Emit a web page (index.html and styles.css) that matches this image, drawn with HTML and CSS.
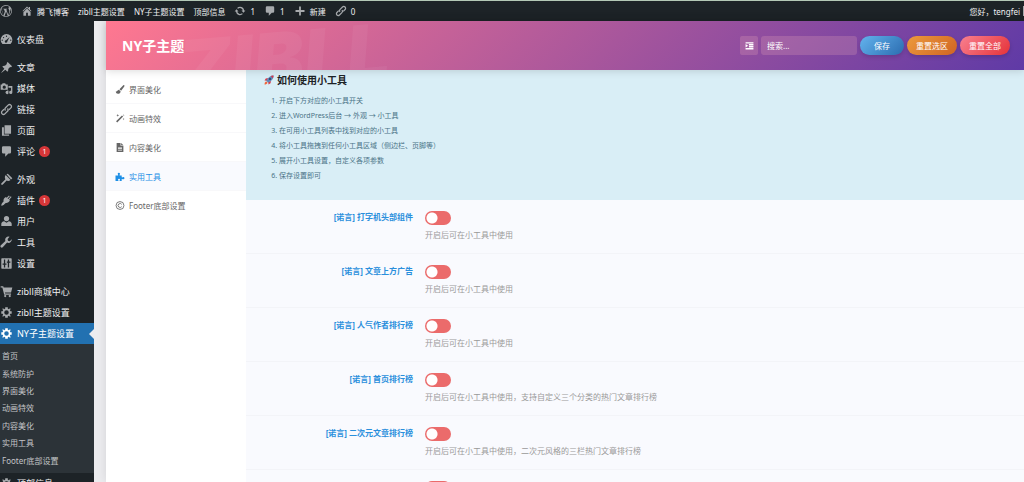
FILE: index.html
```
<!DOCTYPE html>
<html lang="zh-CN">
  <head>
    <meta charset="UTF-8" />
    <meta name="viewport" content="width=device-width, initial-scale=1.0" />
    <title>NY子主题设置</title>
    <link rel="stylesheet" href="styles.css">
  </head>
  <body>
    <!-- shared icons -->
    <svg class="sprite" aria-hidden="true">
      <symbol id="i-gear" viewBox="0 0 20 20">
        <path fill-rule="evenodd" d="M18 12h-2.200c-.1.600-.4 1.200-.7 1.700l1.600 1.600-1.400 1.400-1.600-1.600c-.5.300-1.100.600-1.700.700V18H8v-2.200c-.6-.1-1.200-.4-1.700-.7l-1.600 1.600-1.400-1.400 1.600-1.600c-.3-.5-.6-1.100-.7-1.700H2V8h2.200c.1-.6.4-1.200.7-1.700L3.300 4.700l1.400-1.400 1.600 1.600c.5-.3 1.100-.6 1.700-.7V2h4v2.200c.6.1 1.200.4 1.700.7l1.600-1.600 1.400 1.400-1.600 1.600c.3.5.6 1.100.7 1.700H18zm-8 1.500a3.500 3.500 0 1 0 0-7 3.500 3.500 0 0 0 0 7z" />
      </symbol>
      <symbol id="i-comment" viewBox="0 0 20 20">
        <path d="M5 2h10a2 2 0 0 1 2 2v7a2 2 0 0 1-2 2h-2l-5 5v-5H5a2 2 0 0 1-2-2V4a2 2 0 0 1 2-2z" />
      </symbol>
      <symbol id="i-link" viewBox="0 0 20 20">
        <g fill="none" stroke="currentColor" stroke-width="2">
          <path d="M8.500 11.500a3 3 0 0 1 0-4.200l4-4a3 3 0 0 1 4.300 4.200l-3 3" />
          <path d="M11.500 8.500a3 3 0 0 1 0 4.200l-4 4a3 3 0 0 1-4.300-4.200l3-3" />
        </g>
      </symbol>
    </svg>

    <header class="admin-bar">
      <a href="#" class="wp-logo" aria-label="WordPress">
        <svg viewBox="0 0 20 20"><path fill-rule="evenodd" d="M10 0a10 10 0 1 0 0 20 10 10 0 0 0 0-20zm0 1.200a8.800 8.800 0 0 1 6 2.400c-1.500 0-2 1-2 1.800 0 1.500 1.600 2.400 1.600 4.600 0 1-.4 2.200-.9 3.800l-1 3-3.200-9.700 1.300-.1V6.100L8.500 6.200 5.400 6.100V7l1.200.1 1.400 3.900-2 5.900L2.800 7.100 4 7V6.100L2.200 6A8.800 8.800 0 0 1 10 1.200zM1.900 6.600l4.200 11.300A8.800 8.800 0 0 1 1.900 6.600zm8.300 4.200 2.700 7.500a8.800 8.800 0 0 1-5.200.2zm7.500-5a8.800 8.800 0 0 1-3.300 11.800l2.700-7.800c.5-1.300.7-2.600.6-4z" /></svg>
      </a>
      <a href="#">
        <svg viewBox="0 0 20 20"><path d="M16 8.500 17.500 10l-1 1L10 4.500 3.500 11l-1-1L10 2.500l3 3V3.500h2v4zM10 6l6 5.900V18h-4.500v-5h-3v5H4v-6.100z" /></svg>腾飞博客
      </a>
      <a href="#">zibll主题设置</a>
      <a href="#">NY子主题设置</a>
      <a href="#">顶部信息</a>
      <a href="#">
        <svg viewBox="0 0 20 20"><path d="M10 3a7 7 0 0 1 6.900 6H19l-3.200 4L12.500 9h2.200a4.900 4.900 0 0 0-8-2.600L5.200 4.900A7 7 0 0 1 10 3zM4.200 7l3.300 4H5.300a4.900 4.900 0 0 0 8 2.600l1.500 1.500A7 7 0 0 1 3.100 11H1z" /></svg>1
      </a>
      <a href="#"><svg><use href="#i-comment" /></svg>1</a>
      <a href="#">
        <svg viewBox="0 0 20 20"><path d="M8.500 2.500h3v6h6v3h-6v6h-3v-6h-6v-3h6z" /></svg>新建
      </a>
      <a href="#"><svg><use href="#i-link" /></svg>0</a>
      <a href="#" class="account">您好，tengfei<span class="avatar"></span></a>
    </header>

    <div class="wrap">
      <nav class="side-menu">
        <ul>
          <li><a href="#"><svg viewBox="0 0 20 20"><path fill-rule="evenodd" d="M3.800 17A9 9 0 1 1 16.200 17zM10 4a1 1 0 1 0 0 2 1 1 0 0 0 0-2zM5.500 6a1 1 0 1 0 0 2 1 1 0 0 0 0-2zm9.300 0L9.300 11a2 2 0 1 0 2 1.700zM3.500 10a1 1 0 1 0 0 2 1 1 0 0 0 0-2zm13 0a1 1 0 1 0 0 2 1 1 0 0 0 0-2z" /></svg>仪表盘</a></li>
        </ul>
        <ul>
          <li><a href="#"><svg viewBox="0 0 20 20"><path d="m10.400 3 1.400-1.500 6.700 6.700L17 9.600l-1.500-.2-2.900 2.900c.4 1.600.1 3-1.200 4.200l-3.200-3.200L2.500 18 2 17.500l4.700-5.700-3.200-3.200c1.200-1.200 2.600-1.600 4.200-1.200l2.900-2.900z" /></svg>文章</a></li>
          <li><a href="#"><svg viewBox="0 0 20 20"><path fill-rule="evenodd" d="M1 4h2l1-2h4l1 2h3v8H1zm5.500 1.500a2.500 2.500 0 1 0 0 5 2.500 2.500 0 0 0 0-5zM13 6h6v10a2.500 2.500 0 1 1-2-2.400V9h-4zm-3.500 8H11v-1h2v4.500a2.500 2.500 0 1 1-3.500-3.500z" /></svg>媒体</a></li>
          <li><a href="#"><svg><use href="#i-link" /></svg>链接</a></li>
          <li><a href="#"><svg viewBox="0 0 20 20"><path d="M7 2h10v13H7zM3 5h3v11h8v2H3z" /></svg>页面</a></li>
          <li><a href="#"><svg><use href="#i-comment" /></svg>评论<span class="count">1</span></a></li>
        </ul>
        <ul>
          <li><a href="#"><svg viewBox="0 0 20 20"><path d="m10 2 2-1 7 7-2 2zM8.800 3.200l7.400 7.400c-2 1.800-4.500 2-6 .8L4 18c-1.400.8-2.800-.7-2-2l6.400-6.300c-1.400-2-1.200-4.600.4-6.500z" /></svg>外观</a></li>
          <li><a href="#"><svg viewBox="0 0 20 20"><path d="m13 7.500 3.500-4 1.300 1.200-3.600 4 1 1.100c-1.300 3-3.500 4.500-6.400 4.200C6.500 16.500 4.500 18 2 18c0-2.600 1.200-4.700 3.500-6.500-.6-3 .8-5.300 3.700-6.800l1.100 1.100 3.400-3.500 1.400 1.300-3.500 3.500z" /></svg>插件<span class="count">1</span></a></li>
          <li><a href="#"><svg viewBox="0 0 20 20"><circle cx="10" cy="5.500" r="4" /><path d="M6.500 9.500 10 12l3.500-2.500c3 .5 4.500 2 4.500 4.500v3H2v-3c0-2.500 1.500-4 4.500-4.500z" /></svg>用户</a></li>
          <li><a href="#"><svg viewBox="0 0 20 20"><path d="M16.700 8.800a5 5 0 0 1-5.800 1.300l-6.700 7.100a2 2 0 0 1-2.900-2.900l7-6.600a5 5 0 0 1 6.500-6.400L11.700 4.500l.6 2.800 2.800.6L18 5c.3 1.400-.2 2.800-1.300 3.800z" /></svg>工具</a></li>
          <li><a href="#"><svg viewBox="0 0 20 20"><path fill-rule="evenodd" d="M3 2h14a1 1 0 0 1 1 1v14a1 1 0 0 1-1 1H3a1 1 0 0 1-1-1V3a1 1 0 0 1 1-1zm3 2v6H4v2h2v4h2v-4h2v-2H8V4zm6 0v3h-1.500v2H12v7h2V9h2V7h-2V4z" /></svg>设置</a></li>
        </ul>
        <ul>
          <li><a href="#"><svg viewBox="0 0 20 20"><path d="M1 2h4l.6 2H19l-2 7.500H7.500L8 13h9v2H6.500L3.600 4H1z" /><circle cx="8" cy="17" r="1.700" /><circle cx="15" cy="17" r="1.700" /></svg>zibll商城中心</a></li>
          <li><a href="#"><svg><use href="#i-gear" /></svg>zibll主题设置</a></li>
          <li class="current">
            <a href="#"><svg><use href="#i-gear" /></svg>NY子主题设置</a>
            <ul class="submenu">
              <li><a href="#">首页</a></li>
              <li><a href="#">系统防护</a></li>
              <li><a href="#">界面美化</a></li>
              <li><a href="#">动画特效</a></li>
              <li><a href="#">内容美化</a></li>
              <li><a href="#">实用工具</a></li>
              <li><a href="#">Footer底部设置</a></li>
            </ul>
          </li>
          <li><a href="#"><svg><use href="#i-gear" /></svg>顶部信息</a></li>
        </ul>
      </nav>

      <main class="panel">
        <div class="panel-header">
          <span class="watermark" aria-hidden="true">ZIBLL</span>
          <h1>NY子主题</h1>
          <div class="actions">
            <button type="button" class="expand" aria-label="展开">
              <svg viewBox="0 0 16 16"><path d="M1 2h14v2.500H1zm6 3.500h8V8H7zM7 9h8v2.500H7zm-6 3.500h14V15H1zM1 5.500 5.500 8.500 1 11.500z" /></svg>
            </button>
            <input type="text" placeholder="搜索..." aria-label="搜索" />
            <button type="button" class="btn save">保存</button>
            <button type="button" class="btn reset-section">重置选区</button>
            <button type="button" class="btn reset-all">重置全部</button>
          </div>
        </div>

        <div class="panel-body">
          <nav class="tabs">
            <a href="#"><svg viewBox="0 0 16 16"><path d="M15.500.500c.9.800.4 1.800-.2 2.800L10 10 7 7.500 13 1.200c.9-.9 1.700-1.300 2.500-.7zM6 8.500 9 11c.2 3-2 4.500-4.700 4.500C2 15.500.8 14 .5 11.500c2.500 1 2.500-2.500 5.500-3z" /></svg>界面美化</a>
            <a href="#"><svg viewBox="0 0 16 16"><path d="m11.500 2.500 2 2L3 15l-2-2zM4 0l.7 1.800 1.800.7-1.800.7L4 5l-.7-1.800-1.800-.7 1.800-.7zm10.500 7 .5 1.500 1 .5-1 .5-.5 1.500-.5-1.500-1.500-.5 1.500-.5zM14 0l.5 1.300L16 2l-1.500.5L14 4" /></svg>动画特效</a>
            <a href="#"><svg viewBox="0 0 16 16"><path fill-rule="evenodd" d="M2 0h7v5h5v11H2zm8 0 4 4h-4zM4.500 7v1.200h7V7zm0 2.500v1.200h7V9.500zm0 2.500v1.200h7V12z" /></svg>内容美化</a>
            <a href="#" class="active"><svg viewBox="0 0 16 16"><path d="M0 6h4.500C5.500 5 3.500 4 4 2.500 4.500 1 7.500 1 8 2.500 8.500 4 6.500 5 7.500 6H11v3.500c1 .8 2-.8 3.500-.5 2 .5 2 3.500 0 4-1.500.3-2.500-1.300-3.500-.5V16H7.500c-1-1 .5-1.500.5-2.700 0-1.500-3.500-1.500-3.500 0 0 1.200 1.500 1.700.5 2.700H0z" /></svg>实用工具</a>
            <a href="#"><svg viewBox="0 0 16 16"><g fill="none" stroke="currentColor" stroke-width="1.500"><circle cx="8" cy="8" r="7" /><path d="M11 6a3.500 3.500 0 1 0 0 4" /></g></svg>Footer底部设置</a>
          </nav>

          <div class="content">
            <section class="notice">
              <h2>
                <svg viewBox="0 0 20 20">
                  <path fill="#f2653a" d="M1 19c0-3 1-5.500 4-6l2 2c-.5 3-3 4-6 4z" />
                  <path fill="#d8394c" d="M8 6 3.500 7 1 11l5 .5zM14 12l-1 4.500L9 19l-.5-5z" />
                  <path fill="#5f86b5" d="M19 1c.3 5-2 9.500-10.500 14.500l-4-4C9.500 3 14 .7 19 1z" />
                  <path fill="#d8394c" d="M19 1c.1 2-.2 3.800-1.200 5.600L13.400 2.200C15.200 1.200 17 .9 19 1z" />
                  <circle cx="12" cy="8" r="2.200" fill="#26416c" />
                </svg>如何使用小工具
              </h2>
              <ol>
                <li>开启下方对应的小工具开关</li>
                <li>进入WordPress后台 → 外观 → 小工具</li>
                <li>在可用小工具列表中找到对应的小工具</li>
                <li>将小工具拖拽到任何小工具区域（侧边栏、页脚等）</li>
                <li>展开小工具设置，自定义各项参数</li>
                <li>保存设置即可</li>
              </ol>
            </section>

            <div class="field">
              <label for="typing">[诺言] 打字机头部组件</label>
              <div><input type="checkbox" class="switch" id="typing" /><p>开启后可在小工具中使用</p></div>
            </div>
            <div class="field">
              <label for="post-ad">[诺言] 文章上方广告</label>
              <div><input type="checkbox" class="switch" id="post-ad" /><p>开启后可在小工具中使用</p></div>
            </div>
            <div class="field">
              <label for="author-rank">[诺言] 人气作者排行榜</label>
              <div><input type="checkbox" class="switch" id="author-rank" /><p>开启后可在小工具中使用</p></div>
            </div>
            <div class="field">
              <label for="home-rank">[诺言] 首页排行榜</label>
              <div><input type="checkbox" class="switch" id="home-rank" /><p>开启后可在小工具中使用，支持自定义三个分类的热门文章排行榜</p></div>
            </div>
            <div class="field">
              <label for="acg-rank">[诺言] 二次元文章排行榜</label>
              <div><input type="checkbox" class="switch" id="acg-rank" /><p>开启后可在小工具中使用，二次元风格的三栏热门文章排行榜</p></div>
            </div>
            <div class="field">
              <div><input type="checkbox" class="switch" aria-label="小工具" /></div>
            </div>
          </div>
        </div>
      </main>
    </div>
  </body>
</html>
```
FILE: styles.css
```
* {
  box-sizing: border-box;
}
body {
  display: flex;
  flex-direction: column;
  height: 100vh;
  margin: 0;
  overflow: hidden;
  background: #ececef;
  font-family: "Noto Sans", "Noto Sans CJK SC", sans-serif;
  font-size: 8px;
}
ul,
ol,
p,
h1,
h2 {
  margin: 0;
  padding: 0;
}
ul {
  list-style: none;
}
a {
  color: inherit;
  text-decoration: none;
}
svg {
  flex: none;
  fill: currentColor;
}
.sprite {
  position: absolute;
  width: 0;
  height: 0;
}

/* top bar */
.admin-bar {
  display: flex;
  flex: none;
  align-items: center;
  gap: 9px;
  height: 21px;
  border-top: 1px solid #b4c8b6;
  background: #1d2327;
  color: #f0f0f1;
  white-space: nowrap;
}
.admin-bar a {
  display: flex;
  align-items: center;
  gap: 4px;
}
.admin-bar svg {
  width: 12px;
  height: 12px;
  color: #a7aaad;
}
.admin-bar .account {
  gap: 3px;
  margin-left: auto;
}
.avatar {
  width: 1px;
  height: 10px;
  background: #a7aaad;
}

.wrap {
  display: flex;
  flex: 1;
  min-height: 0;
}

/* left menu */
.side-menu {
  flex: none;
  width: 94px;
  padding-top: 8px;
  overflow: hidden;
  background: #1d2327;
  color: #f0f0f1;
  font-size: 9px;
  white-space: nowrap;
}
.side-menu > ul + ul {
  margin-top: 7px;
}
.side-menu > ul > li > a {
  display: flex;
  position: relative;
  align-items: center;
  gap: 4px;
  height: 21px;
}
.side-menu svg {
  width: 13px;
  height: 13px;
  color: #a7aaad;
}
.count {
  width: 11px;
  height: 11px;
  border-radius: 50%;
  background: #d63638;
  color: #fff;
  font-size: 7px;
  line-height: 11px;
  text-align: center;
}
.side-menu .current > a {
  background: #2271b1;
  color: #fff;
}
.side-menu .current > a svg {
  color: #fff;
}
.side-menu .current > a::after {
  content: "";
  position: absolute;
  top: 6px;
  right: 0;
  border: 5px solid transparent;
  border-left: 0;
  border-right-color: #ececef;
}
.submenu {
  display: grid;
  grid-auto-rows: 1fr;
  align-items: center;
  height: 129px;
  padding: 3px 2px 4px;
  background: #2c3338;
  color: #c3c4c7;
  font-size: 8px;
}

/* settings panel */
.panel {
  display: flex;
  flex: 1;
  flex-direction: column;
  min-width: 0;
  margin-left: 12px;
  background: #fff;
  box-shadow: 0 0 10px rgba(0, 0, 0, 0.1);
}
.panel-header {
  display: flex;
  position: relative;
  z-index: 1;
  flex: none;
  align-items: center;
  justify-content: space-between;
  height: 49px;
  padding: 0 14px 0 16px;
  overflow: hidden;
  background: linear-gradient(135deg, #ff7890, #5f3aa6);
  box-shadow: 0 1px 8px rgba(0, 0, 0, 0.15);
  color: #fff;
}
.panel-header h1 {
  font-size: 14px;
  line-height: 20px;
}
.watermark {
  position: absolute;
  top: 8px;
  left: 72px;
  color: rgba(255, 255, 255, 0.05);
  font-family: Inter, sans-serif;
  font-size: 76px;
  font-style: italic;
  font-weight: 900;
  line-height: 60px;
  transform: rotate(-5deg);
}
.actions {
  display: flex;
  gap: 3px;
}
.actions button,
.actions input {
  height: 19px;
  border: 0;
  color: #fff;
  font-family: inherit;
  font-size: 8px;
}
.actions button {
  padding: 0;
  cursor: pointer;
}
.actions .expand {
  display: flex;
  align-items: center;
  justify-content: center;
  width: 18px;
  border-radius: 2px;
  background: rgba(255, 190, 190, 0.2);
}
.expand svg {
  width: 9px;
  height: 9px;
}
.actions input {
  width: 96px;
  padding: 0 6px;
  border-radius: 3px;
  background: rgba(255, 190, 190, 0.2);
}
.actions input::placeholder {
  color: #fff;
}
.actions .btn {
  width: 50px;
  border-radius: 10px;
  box-shadow: 0 2px 4px rgba(0, 0, 0, 0.15);
}
.actions .save {
  width: 44px;
  background: linear-gradient(135deg, #63b3ed, #2b6cb0);
}
.actions .reset-section {
  background: linear-gradient(135deg, #ed9a3c, #cf6424);
}
.actions .reset-all {
  background: linear-gradient(135deg, #f98090, #e53238);
}

.panel-body {
  display: flex;
  flex: 1;
  min-height: 0;
}
.tabs {
  flex: none;
  width: 140px;
  padding-top: 5px;
  color: #666;
}
.tabs a {
  display: flex;
  align-items: center;
  gap: 4px;
  height: 29px;
  padding: 0 9px;
  border-bottom: 1px solid #f8f8fa;
}
.tabs a:last-child {
  border-bottom: 0;
}
.tabs svg {
  width: 10px;
  height: 9px;
}
.tabs .active {
  background: #f9fafe;
  color: #1e8fe6;
}

.content {
  flex: 1;
  min-width: 0;
  overflow: hidden;
  background: #f9fafe;
}
.notice {
  height: 130px;
  padding: 0 18px;
  background: #d9eef6;
  color: #4a7386;
}
.notice h2 {
  display: flex;
  align-items: center;
  gap: 3px;
  color: #1d2327;
  font-size: 10px;
  line-height: 20px;
}
.notice svg {
  width: 10px;
  height: 10px;
}
.notice ol {
  margin-top: 3px;
  padding-left: 15px;
  font-size: 7px;
  line-height: 15px;
}
.field {
  display: grid;
  grid-template-columns: 167px 1fr;
  gap: 12px;
  height: 54px;
  padding-top: 11px;
  border-bottom: 1px solid #f3f4f8;
}
.field > div {
  grid-column: 2;
}
.field label {
  color: #2a8fdc;
  font-weight: bold;
  line-height: 12px;
  text-align: right;
}
.field p {
  margin-top: 4px;
  color: #999;
  line-height: 12px;
}
.switch {
  display: block;
  width: 26px;
  height: 14px;
  margin: 0;
  border-radius: 7px;
  appearance: none;
  background: radial-gradient(circle at 7px 7px, #fff 5px, transparent 6px) #eb6b6b;
  cursor: pointer;
}
.switch:checked {
  background: radial-gradient(circle at 19px 7px, #fff 5px, transparent 6px) #4bb543;
}
```
